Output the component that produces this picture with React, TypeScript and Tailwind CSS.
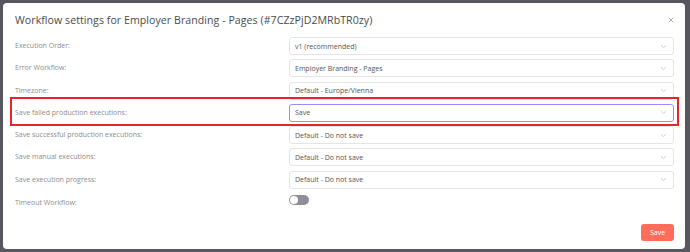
import React from "react";

const rows = [
  { label: "Execution Order:", value: "v1 (recommended)" },
  { label: "Error Workflow:", value: "Employer Branding - Pages" },
  { label: "Timezone:", value: "Default - Europe/Vienna" },
  { label: "Save failed production executions:", value: "Save", focus: true },
  { label: "Save successful production executions:", value: "Default - Do not save" },
  { label: "Save manual executions:", value: "Default - Do not save" },
  { label: "Save execution progress:", value: "Default - Do not save" },
];

function Chevron() {
  return (
    <svg width="7" height="5" viewBox="0 0 7 5" fill="none" className="shrink-0">
      <path d="M1 1.2 L3.5 3.6 L6 1.2" stroke="#c0c4cc" strokeWidth="0.8" />
    </svg>
  );
}

export default function App() {
  return (
    <div
      className="w-[690px] h-[252px] bg-[#585760] pt-[3px] pl-[3px] overflow-hidden"
      style={{ fontFamily: '"Open Sans", "Noto Sans", sans-serif' }}
    >
      <div className="w-[682px] h-[246px] bg-white rounded-[4px] pl-[12px] pr-[11px] flex flex-col relative">
        <div className="h-[34px] flex items-center justify-between pt-[1px]">
          <span className="text-[10.6px] text-[#4b4b4b] tracking-[0.05px]">
            Workflow settings for Employer Branding - Pages (#7CZzPjD2MRbTR0zy)
          </span>
          <svg width="6" height="6" viewBox="0 0 6 6" className="mt-[-1px]">
            <path d="M0.8 0.8 L5.2 5.2 M5.2 0.8 L0.8 5.2" stroke="#9a9a9a" strokeWidth="0.8" />
          </svg>
        </div>
        <div className="flex flex-col gap-[4.3px]">
          {rows.map((r) => (
            <div key={r.label} className="relative flex items-center h-[18px]">
              {r.focus && (
                <div className="absolute left-[-5px] right-[-5px] top-[-7px] bottom-[-4px] border-2 border-[#e8232b] pointer-events-none" />
              )}
              <div className="w-[274px] text-[7px] text-[#8c8c8c] leading-none mt-[-1px]">{r.label}</div>
              <div
                className={`flex-1 h-full rounded-[3px] border flex items-center justify-between pl-[5px] pr-[6px] ${
                  r.focus ? "border-[#9a8ff0]" : "border-[#e2e4ea]"
                }`}
              >
                <span className="text-[7px] text-[#555555] leading-none">{r.value}</span>
                <Chevron />
              </div>
            </div>
          ))}
          <div className="flex items-center h-[14px]">
            <div className="w-[274px] text-[7px] text-[#8c8c8c] leading-none mt-[4px]">Timeout Workflow:</div>
            <div className="w-[20px] h-[10px] rounded-full bg-[#8f8f97] relative">
              <div className="absolute left-[1px] top-[1px] w-[8px] h-[8px] rounded-full bg-white" />
            </div>
          </div>
        </div>
        <div className="flex justify-end mt-[17px]">
          <button className="w-[33px] h-[17px] rounded-[3px] bg-[#ff6d5a] text-white text-[7px] leading-none">
            Save
          </button>
        </div>
      </div>
    </div>
  );
}
